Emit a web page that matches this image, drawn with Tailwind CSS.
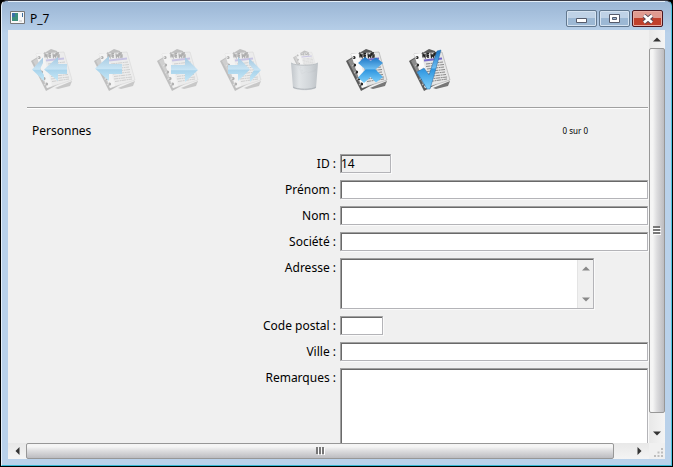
<!DOCTYPE html>
<html lang="fr">
<head>
    <meta charset="UTF-8">
    <meta name="viewport" content="width=device-width, initial-scale=1.0">
    <title>P_7</title>
    <script src="https://cdn.jsdelivr.net/npm/@tailwindcss/browser@4"></script>
</head>
<body class="h-screen overflow-hidden bg-black font-['Noto_Sans','Open_Sans',sans-serif] text-[12px] leading-4 text-black">

    <!-- Shared icon parts -->
    <svg class="absolute size-0" aria-hidden="true">
        <defs>
            <linearGradient id="blue" x1="0" y1="0" x2="0" y2="1">
                <stop offset="0" stop-color="#1b74c4"/>
                <stop offset=".45" stop-color="#6cbcf0"/>
                <stop offset=".5" stop-color="#2f96e0"/>
                <stop offset="1" stop-color="#7fd0fa"/>
            </linearGradient>
            <linearGradient id="pale" x1="0" y1="0" x2="0" y2="1">
                <stop offset="0" stop-color="#a4c8e0"/>
                <stop offset=".5" stop-color="#c8e4f4"/>
                <stop offset=".55" stop-color="#aad4ec"/>
                <stop offset="1" stop-color="#c6e8f7"/>
            </linearGradient>
            <linearGradient id="bin" x1="0" y1="0" x2="1" y2="0">
                <stop offset="0" stop-color="#bcc1c6"/>
                <stop offset=".3" stop-color="#dfe3e6"/>
                <stop offset=".7" stop-color="#ced3d7"/>
                <stop offset="1" stop-color="#b8bdc2"/>
            </linearGradient>
            <symbol id="news" viewBox="0 0 42 44">
                <path d="M0 13 20 1 26 3 37 31 15 43Z" fill="#5a5a5a"/>
                <path d="M2 13 8 9 22 36 16 40Z" fill="#8c8c8c"/>
                <path d="M24 40 41 33 39 38 27 41Z" fill="#777"/>
                <path d="M5 6 33 4 41 32 16 40Z" fill="#e6e6e6" stroke="#999" stroke-width=".5"/>
                <path d="M5 6 12 5 21 38 16 40Z" fill="#fafafa"/>
                <path d="M14 9.500V6l2 3V6M18 9V5.500h2M18 7.300h2M18 9h2M22 5.500l.5 3.500 1.200-2 1 2 .3-4M28 5h-2v2h2v2h-2" fill="none" stroke="#222" stroke-width="1.300"/>
                <path d="M15 12.500 33 10.500" stroke="#7468c8" stroke-width="1.800"/>
                <path d="M17 16 34 14M17 18.500 35 16.500M18 21 35 19M18 23.500 36 21.500M19 26 36 24M20 28.500 37 26.500M20 31 38 29M21 33.500 38 31" stroke="#8a8a8a" stroke-width="1" stroke-dasharray="4 .6 2 .5"/>
                <path d="M8 9.500h.1M8.500 17h.1M10.500 24h.1M13 30.500h.1M15.500 36h.1" stroke="#222" stroke-width="3" stroke-linecap="round"/>
                <path d="M6 10.500 8 9M6 18 8 16.500M8 25 10 23.500M10.500 31.500 12.500 30M13 37 15 35.500" stroke="#bbb" stroke-width="1.200"/>
            </symbol>
        </defs>
    </svg>

    <div class="flex h-full flex-col pr-px pb-px pl-px">
        <div class="flex min-h-0 flex-1 flex-col rounded-t-md border-t border-r border-b border-l border-t-[#3a3a44] border-r-[#4cc4e0] border-b-[#35b8d4] border-l-[#e6f0fa] bg-linear-to-b from-[#9ab5d4] from-0% via-[#b9d1ea] via-7% to-[#b9d1ea] px-[6px] pb-[6px]">

            <header class="flex h-[29px] shrink-0 items-center shadow-[inset_0_1px_0_#e4eef8]">
                <svg class="mt-[4px] ml-[2px] h-[13px] w-[15px]" viewBox="0 0 15 13" aria-hidden="true">
                    <path d="M.5.5h14v12H.5z" fill="#f8f8f8" stroke="#777"/>
                    <path d="M2 2h6v8H2z" fill="#3d8f7c"/>
                    <path d="M2 2h3v4H2z" fill="#3c70a8"/>
                    <path d="M12.500 2v4" stroke="#3d6ea0"/>
                    <path d="M9 9h3v2H9z" fill="#ddd"/>
                </svg>
                <h1 class="ml-[5px] flex-1 pt-[6px]">P_7</h1>
                <div class="flex gap-[2px] pr-[2px] pt-[6px]">
                    <button aria-label="Réduire" class="flex h-[17px] w-[31px] items-center justify-center rounded-xs border border-[#62788f] bg-linear-to-b from-[#bfd2e6] from-50% to-[#9cb8d4] to-50% shadow-[inset_0_0_0_1px_#d5e3f1]">
                        <svg class="h-[10px] w-[12px]" viewBox="0 0 12 10"><path d="M.5 4.500h10v4H.5z" fill="#fff" stroke="#555b6b"/></svg>
                    </button>
                    <button aria-label="Agrandir" class="flex h-[17px] w-[31px] items-center justify-center rounded-xs border border-[#62788f] bg-linear-to-b from-[#bfd2e6] from-50% to-[#9cb8d4] to-50% shadow-[inset_0_0_0_1px_#d5e3f1]">
                        <svg class="h-[9px] w-[11px]" viewBox="0 0 11 9"><path d="M.5.500h10v8H.5z" fill="#fff" stroke="#555b6b"/><path d="M3.500 3.500h4v2h-4z" fill="#9cb8d4" stroke="#555b6b"/></svg>
                    </button>
                    <button aria-label="Fermer" class="flex h-[17px] w-[31px] items-center justify-center rounded-xs border border-[#4b1620] bg-linear-to-b from-[#e09a90] from-45% to-[#c0402c] to-45% shadow-[inset_0_0_0_1px_#e8aba2]">
                        <svg class="h-[10px] w-[12px]" viewBox="0 0 12 10"><path d="M2 1.500 10 8.500M10 1.500 2 8.500" stroke="#5a4a58" stroke-width="4.500"/><path d="M2 1.500 10 8.500M10 1.500 2 8.500" stroke="#fff" stroke-width="2.600"/></svg>
                    </button>
                </div>
            </header>

            <div class="grid min-h-0 flex-1 grid-cols-[1fr_16px] grid-rows-[minmax(0,1fr)_16px] bg-[#f0f0f0]">

                <main class="min-h-0 overflow-hidden pr-px pl-[19px]">
                    <div class="flex h-[78px] gap-[21px] border-b border-[#a0a0a0] pt-[18px] pl-1 shadow-[0_1px_0_#fff]">
                        <button disabled aria-label="Premier" class="h-[44px] w-[42px]">
                            <svg viewBox="0 0 42 44">
                                <use href="#news" width="42" height="44" opacity=".32"/>
                                <path d="M12 9.500V15L9 21l4 6v6L1 21.500Z" fill="url(#pale)"/>
                                <path d="M13 21.500 27 9v7h9v10h-9v7Z" fill="url(#pale)"/>
                            </svg>
                        </button>
                        <button disabled aria-label="Précédent" class="h-[44px] w-[42px]">
                            <svg viewBox="0 0 42 44">
                                <use href="#news" width="42" height="44" opacity=".32"/>
                                <path d="M1 20.500 15 8v8h13v10H15v7Z" fill="url(#pale)"/>
                            </svg>
                        </button>
                        <button disabled aria-label="Suivant" class="h-[44px] w-[42px]">
                            <svg viewBox="0 0 42 44">
                                <use href="#news" width="42" height="44" opacity=".32"/>
                                <path d="M14 17h14V9l13 13-13 12v-8H14Z" fill="url(#pale)"/>
                            </svg>
                        </button>
                        <button disabled aria-label="Dernier" class="h-[44px] w-[42px]">
                            <svg viewBox="0 0 42 44">
                                <use href="#news" width="42" height="44" opacity=".32"/>
                                <path d="M8 17h10V9l12 12.500L18 33v-7H8Z" fill="url(#pale)"/>
                                <path d="M29 10 41 22 30 34v-6l4-6-5-6Z" fill="url(#pale)"/>
                            </svg>
                        </button>
                        <button disabled aria-label="Supprimer" class="h-[44px] w-[42px]">
                            <svg viewBox="0 0 42 44">
                                <use href="#news" x="10" y="2" width="24" height="25" opacity=".3"/>
                                <path d="M8 15c4 3 23 3 27 0l-2 25c-4 3-19 3-23 0Z" fill="url(#bin)" opacity=".9"/>
                                <path d="M8 15c4 3 23 3 27 0" fill="none" stroke="#bcc1c5"/>
                                <path d="M10 39c4 3 19 3 23 0" fill="none" stroke="#aeb3b8"/>
                            </svg>
                        </button>
                        <button aria-label="Annuler" class="h-[44px] w-[42px]">
                            <svg viewBox="0 0 42 44">
                                <use href="#news" width="42" height="44"/>
                                <path d="M12 15 19 9l5.500 4L30 9.500l7 5.500-7.500 6.500L37 29l-7 5.500-5.500-5.500L18 35l-6-5.500 7.500-8Z" fill="url(#blue)"/>
                            </svg>
                        </button>
                        <button aria-label="Valider" class="h-[44px] w-[42px]">
                            <svg viewBox="0 0 42 44">
                                <use href="#news" width="42" height="44"/>
                                <path d="M8 24 15 20l5 7L28 3l4-1-6 22-5 17h-3Z" fill="url(#blue)" stroke="#2468a4" stroke-width=".5"/>
                            </svg>
                        </button>
                    </div>

                    <div class="flex items-center justify-between pt-[15px] pr-[60px] pb-[15px] pl-[5px]">
                        <h2>Personnes</h2>
                        <span class="text-[8px]">0 sur 0</span>
                    </div>

                    <form class="grid grid-cols-[309px_1fr] gap-x-1 gap-y-[7px]">
                        <label for="id" class="text-right leading-[19px]">ID :</label>
                        <input id="id" value="14" readonly class="h-[19px] w-[51px] border border-[#a0a0a0] border-r-[#b4b4b8] border-b-[#b4b4b8] bg-[#f0f0f0] shadow-[inset_1px_1px_0_#696969,1px_1px_0_#fafafa] outline-none">

                        <label for="prenom" class="text-right leading-[19px]">Prénom :</label>
                        <input id="prenom" class="h-[19px] w-full border border-[#a0a0a0] border-r-[#b4b4b8] border-b-[#b4b4b8] bg-white shadow-[inset_1px_1px_0_#696969,1px_1px_0_#fafafa] outline-none">

                        <label for="nom" class="text-right leading-[19px]">Nom :</label>
                        <input id="nom" class="h-[19px] w-full border border-[#a0a0a0] border-r-[#b4b4b8] border-b-[#b4b4b8] bg-white shadow-[inset_1px_1px_0_#696969,1px_1px_0_#fafafa] outline-none">

                        <label for="societe" class="text-right leading-[19px]">Société :</label>
                        <input id="societe" class="h-[19px] w-full border border-[#a0a0a0] border-r-[#b4b4b8] border-b-[#b4b4b8] bg-white shadow-[inset_1px_1px_0_#696969,1px_1px_0_#fafafa] outline-none">

                        <label for="adresse" class="text-right leading-[19px]">Adresse :</label>
                        <div class="flex h-[51px] w-[254px] border border-[#a0a0a0] border-r-[#b4b4b8] border-b-[#b4b4b8] bg-[#f0f0f0] pt-px pl-px shadow-[inset_1px_1px_0_#696969,1px_1px_0_#fafafa]">
                            <textarea id="adresse" class="min-w-0 flex-1 resize-none overflow-hidden bg-white outline-none"></textarea>
                            <div class="flex w-4 flex-col items-center justify-between border-l border-[#e4e4e4] py-[6px]">
                                <svg class="h-[5px] w-[8px]" viewBox="0 0 8 5"><path d="M0 4.500 4 .5 8 4.500Z" fill="#888"/></svg>
                                <svg class="h-[5px] w-[8px]" viewBox="0 0 8 5"><path d="M0 .5h8L4 4.500Z" fill="#888"/></svg>
                            </div>
                        </div>

                        <label for="cp" class="text-right leading-[19px]">Code postal :</label>
                        <input id="cp" class="h-[19px] w-[43px] border border-[#a0a0a0] border-r-[#b4b4b8] border-b-[#b4b4b8] bg-white shadow-[inset_1px_1px_0_#696969,1px_1px_0_#fafafa] outline-none">

                        <label for="ville" class="text-right leading-[19px]">Ville :</label>
                        <input id="ville" class="h-[19px] w-full border border-[#a0a0a0] border-r-[#b4b4b8] border-b-[#b4b4b8] bg-white shadow-[inset_1px_1px_0_#696969,1px_1px_0_#fafafa] outline-none">

                        <label for="remarques" class="text-right leading-[19px]">Remarques :</label>
                        <textarea id="remarques" class="h-[120px] w-full resize-none border border-[#a0a0a0] border-r-[#b4b4b8] border-b-[#b4b4b8] bg-white shadow-[inset_1px_1px_0_#696969,1px_1px_0_#fafafa] outline-none"></textarea>
                    </form>
                </main>

                <!-- Vertical scrollbar -->
                <div class="flex flex-col bg-linear-to-r from-[#e8e8e8] to-[#f4f4f4]">
                    <button type="button" aria-label="Haut" class="flex h-[18px] items-center justify-center">
                        <svg class="h-[5px] w-[8px]" viewBox="0 0 8 5"><path d="M0 4.500 4 .5 8 4.500Z" fill="#333"/></svg>
                    </button>
                    <div class="flex flex-1 items-center justify-center rounded-xs border border-[#979797] bg-linear-to-r from-[#f5f5f5] from-20% via-[#dcdcde] via-50% to-[#bcbcc0]">
                        <svg class="h-[9px] w-[8px]" viewBox="0 0 8 9"><path d="M0 1h7M0 4h7M0 7h7" stroke="#555" stroke-width="1.500"/><path d="M1 2.500h7M1 5.500h7M1 8.500h7" stroke="#fff"/></svg>
                    </div>
                    <button type="button" aria-label="Bas" class="flex h-[30px] items-center justify-center pt-[10px]">
                        <svg class="h-[5px] w-[8px]" viewBox="0 0 8 5"><path d="M0 .5h8L4 4.500Z" fill="#333"/></svg>
                    </button>
                </div>

                <!-- Horizontal scrollbar -->
                <div class="flex bg-linear-to-b from-[#e8e8e8] to-[#f4f4f4]">
                    <button type="button" aria-label="Gauche" class="flex w-[18px] items-center justify-center">
                        <svg class="h-[8px] w-[5px]" viewBox="0 0 5 8"><path d="M4.500 0v8L.5 4Z" fill="#333"/></svg>
                    </button>
                    <div class="flex flex-1 items-center justify-center rounded-xs border border-[#979797] bg-linear-to-b from-[#f5f5f5] from-20% via-[#dcdcde] via-50% to-[#bcbcc0]">
                        <svg class="h-[8px] w-[9px]" viewBox="0 0 9 8"><path d="M1 0v7M4 0v7M7 0v7" stroke="#555" stroke-width="1.500"/><path d="M2.500 1v7M5.500 1v7M8.500 1v7" stroke="#fff"/></svg>
                    </div>
                    <button type="button" aria-label="Droite" class="flex w-[35px] items-center justify-center pl-[16px]">
                        <svg class="h-[8px] w-[5px]" viewBox="0 0 5 8"><path d="M.5 0v8l4-4Z" fill="#333"/></svg>
                    </button>
                </div>

                <div class="flex items-end justify-end p-[2px]">
                    <svg class="size-[9px]" viewBox="0 0 9 9"><path d="M7 0h2v2H7zM7 3.500h2v2H7zM3.500 3.500h2v2h-2zM7 7h2v2H7zM3.500 7h2v2h-2zM0 7h2v2H0z" fill="#bdbdbd"/></svg>
                </div>
            </div>
        </div>
    </div>

</body>
</html>
